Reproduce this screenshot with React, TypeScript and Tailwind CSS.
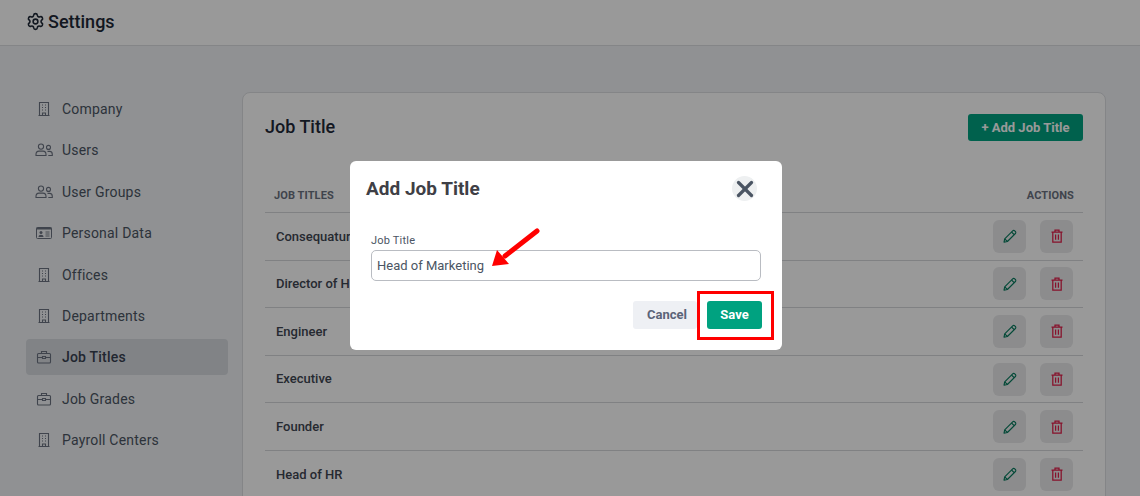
import { Settings, X } from "lucide-react";
import type { ReactNode } from "react";

function BuildingIcon() {
  return (
    <svg width="16" height="16" viewBox="0 0 16 16" fill="none" stroke="currentColor" strokeWidth="1.1">
      <path d="M3.5 14.5V1.5h9v13M2.5 14.5h11M6.5 14.5v-2.5h3v2.5" />
      <path d="M6 4h1M9 4h1M6 6.5h1M9 6.5h1M6 9h1M9 9h1" />
    </svg>
  );
}

function UsersIcon() {
  return (
    <svg width="18" height="16" viewBox="0 0 18 16" fill="none" stroke="currentColor" strokeWidth="1.1">
      <circle cx="6" cy="4.6" r="2.6" />
      <path d="M1 12.5c0-2.2 1-3.4 3-3.4h4c2 0 3 1.2 3 3.4v1H1z" />
      <circle cx="13.5" cy="5.4" r="2" />
      <path d="M12.5 9.4h2.2c1.6 0 2.6 1 2.6 3v1.1h-4" />
    </svg>
  );
}

function IdCardIcon() {
  return (
    <svg width="16" height="16" viewBox="0 0 16 16">
      <rect x="0.5" y="2.5" width="15" height="11" rx="1" fill="none" stroke="currentColor" />
      <rect x="0.5" y="2.5" width="15" height="2" fill="currentColor" />
      <circle cx="5" cy="7.5" r="1.5" fill="currentColor" />
      <path d="M2.5 12c0-1.5 1-2.3 2.5-2.3s2.5.8 2.5 2.3z" fill="currentColor" />
      <path d="M9.5 7h4M9.5 9h4M9.5 11h4" stroke="currentColor" strokeWidth="0.9" />
    </svg>
  );
}

function BriefcaseIcon() {
  return (
    <svg width="16" height="16" viewBox="0 0 16 16" fill="none" stroke="currentColor" strokeWidth="1.1">
      <rect x="1.5" y="4.5" width="13" height="9.5" rx="1" />
      <path d="M5.5 4.5V2.5h5v2M1.5 8.5h5M9.5 8.5h5M6.5 7.5h3v2h-3z" />
    </svg>
  );
}

function PencilIcon() {
  return (
    <svg width="16" height="16" viewBox="0 0 16 16" fill="none" stroke="currentColor" strokeWidth="1.1" strokeLinejoin="round">
      <path d="M2 14.2l.7-3.4 8-8a1.4 1.4 0 0 1 2 0l.7.7a1.4 1.4 0 0 1 0 2l-8 8z" />
      <path d="M9.5 4l2.7 2.7M2.7 10.8l2.7 2.7" />
    </svg>
  );
}

function TrashIcon() {
  return (
    <svg width="16" height="16" viewBox="0 0 16 16" fill="none" stroke="currentColor" strokeWidth="1.25">
      <path d="M2.5 4h11M6 4V2h4v2M3.8 4v10.2h8.4V4" />
      <path d="M6.6 6.5v5.2M9.4 6.5v5.2" />
    </svg>
  );
}

const navItems: { label: string; icon: ReactNode; active?: boolean }[] = [
  { label: "Company", icon: <BuildingIcon /> },
  { label: "Users", icon: <UsersIcon /> },
  { label: "User Groups", icon: <UsersIcon /> },
  { label: "Personal Data", icon: <IdCardIcon /> },
  { label: "Offices", icon: <BuildingIcon /> },
  { label: "Departments", icon: <BuildingIcon /> },
  { label: "Job Titles", icon: <BriefcaseIcon />, active: true },
  { label: "Job Grades", icon: <BriefcaseIcon /> },
  { label: "Payroll Centers", icon: <BuildingIcon /> },
];

const rows = ["Consequatur", "Director of HR", "Engineer", "Executive", "Founder", "Head of HR"];

export default function App() {
  return (
    <div className="relative h-[496px] w-[1140px] overflow-hidden bg-[#f0f2f5] font-['Roboto',sans-serif]">
      {/* Page */}
      <header className="flex h-[46px] items-center gap-[3px] border-b border-[#dcdee2] bg-white pb-[2px] pl-[26px]">
        <Settings size={19} strokeWidth={2} className="text-[#1f2937]" />
        <h1 className="text-[18px] font-medium text-[#1f2937]">Settings</h1>
      </header>

      <div className="flex pl-[26px] pr-[34px] pt-[45px]">
        <nav className="flex w-[202px] shrink-0 flex-col gap-[5.4px]">
          {navItems.map((item) => (
            <div
              key={item.label}
              className={`flex h-9 items-center rounded text-sm tracking-[0.2px] text-[#4b5563] ${
                item.active ? "bg-[#d7dbe0] font-medium text-[#374151]" : ""
              }`}
            >
              <span className="flex w-9 justify-center text-[#6b7280]">{item.icon}</span>
              {item.label}
            </div>
          ))}
        </nav>

        <main className="ml-[14px] mt-px h-[500px] flex-1 rounded-lg border border-[#dcdee2] bg-white px-[22px] pt-[21px]">
          <div className="flex items-center justify-between">
            <h2 className="pb-[2px] text-[18px] font-medium leading-[25px] text-[#1f2937]">Job Title</h2>
            <button className="h-[27px] w-[115px] rounded-[3px] bg-[#00a280] text-[13px] font-bold text-white">
              + Add Job Title
            </button>
          </div>
          <div className="mt-[40px] flex h-[32px] items-center justify-between border-b border-[#d5d7db] px-[9px] text-[11px] font-bold tracking-[0.1px] text-[#6b7280]">
            <span>JOB TITLES</span>
            <span>ACTIONS</span>
          </div>
          {rows.map((row) => (
            <div
              key={row}
              className="flex h-[47.6px] items-center justify-between border-b border-[#d5d7db] pl-[11px] pr-[10px] text-[13px] font-medium text-[#3f4652]"
            >
              <span>{row}</span>
              <div className="flex gap-[14px]">
                <span className="flex h-[33px] w-[33px] items-center justify-center rounded-md bg-[#e9eaec] text-[#067a5c]">
                  <PencilIcon />
                </span>
                <span className="flex h-[33px] w-[33px] items-center justify-center rounded-md bg-[#e9eaec] text-[#e11d48]">
                  <TrashIcon />
                </span>
              </div>
            </div>
          ))}
        </main>
      </div>

      {/* Backdrop */}
      <div className="absolute inset-0 bg-black/40" />

      {/* Modal */}
      <div className="absolute left-[350px] top-[161px] h-[189px] w-[432px] rounded-md bg-white">
        <div className="flex items-center justify-between pl-4 pr-[25px] pt-[14px]">
          <h3 className="text-[19px] font-bold leading-[27px] text-[#3f3f46]">Add Job Title</h3>
          <span className="flex h-[25px] w-[25px] items-center justify-center rounded-full bg-[#eef0f1] text-[#4b5563]">
            <X size={26} strokeWidth={3} className="shrink-0" />
          </span>
        </div>
        <div className="px-[21px] pt-[30px]">
          <label className="block text-[11px] leading-[18px] tracking-[0.2px] text-[#4b5563]">Job Title</label>
          <div className="flex h-[31px] items-center rounded-[5px] border border-[#b9bcc2] pl-[5px] text-[13px] text-[#4b5563]">
            Head of Marketing
          </div>
        </div>
        <div className="mr-5 mt-5 flex justify-end gap-[10px]">
          <button className="h-[28px] w-[64px] rounded-[3px] bg-[#eef0f4] pl-[4px] text-[13px] font-bold text-[#5b6478]">
            Cancel
          </button>
          <button className="h-[28px] w-[55px] rounded-[3px] bg-[#00a280] text-[13px] font-bold text-white">
            Save
          </button>
        </div>
      </div>

      {/* Annotations */}
      <div className="absolute left-[697px] top-[291px] h-[49px] w-[77px] border-[3px] border-[#ff0000]" />
      <svg className="absolute left-[485px] top-[222px]" width="60" height="50" viewBox="0 0 60 50">
        <path d="M52 9 L20 34" stroke="#ff0000" strokeWidth="5" strokeLinecap="round" fill="none" />
        <path d="M7 44 L12 28 L24 42 Z" fill="#ff0000" />
      </svg>
    </div>
  );
}
